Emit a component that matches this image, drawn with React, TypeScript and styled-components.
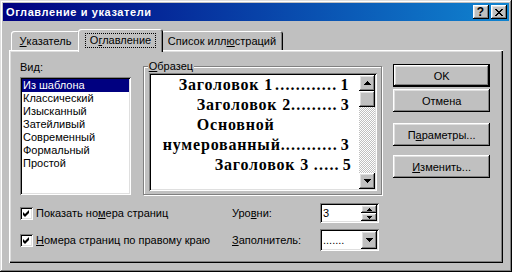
import React from 'react';
import styled, { createGlobalStyle } from 'styled-components';

const GlobalStyle = createGlobalStyle`
  html, body { margin: 0; padding: 0; background: #c0c0c0; }
  body { font-family: "Liberation Sans", Arial, sans-serif; font-size: 11px; color: #000; }
  * { box-sizing: border-box; }
`;

const raised = `box-shadow: inset -1px -1px #000, inset 1px 1px #fff, inset -2px -2px #808080, inset 2px 2px #dfdfdf;`;
const sunken = `box-shadow: inset 1px 1px #808080, inset -1px -1px #fff, inset 2px 2px #000, inset -2px -2px #dfdfdf;`;

// pixel triangle, n rows
function Arrow({ n, down }: { n: number; down?: boolean }) {
  const w = n * 2 - 1;
  return (
    <svg width={w} height={n} viewBox={`0 0 ${w} ${n}`} shapeRendering="crispEdges">
      {Array.from({ length: n }).map((_, i) => (
        <rect key={i} x={n - 1 - i} y={down ? n - 1 - i : i} width={i * 2 + 1} height={1} fill="#000" />
      ))}
    </svg>
  );
}

const closeRows = ['XX....XX', '.XX..XX.', '..XXXX..', '...XX...', '..XXXX..', '.XX..XX.', 'XX....XX'];

function CloseGlyph() {
  return (
    <svg width={8} height={7} viewBox="0 0 8 7" shapeRendering="crispEdges">
      {closeRows.map((row, y) =>
        row.split('').map((c, x) => (c === 'X' ? <rect key={`${x}-${y}`} x={x} y={y} width={1} height={1} fill="#000" /> : null))
      )}
    </svg>
  );
}

function CheckGlyph() {
  return (
    <svg width={13} height={13} viewBox="0 0 13 13">
      <path d="M3 5 L5 7 L9 3 L9 6 L5 10 L3 8 Z" fill="#000" />
    </svg>
  );
}

const styles = ['Из шаблона', 'Классический', 'Изысканный', 'Затейливый', 'Современный', 'Формальный', 'Простой'];

const toc = [
  { text: 'Заголовок 1', dots: 12, num: '1', indent: 28 },
  { text: 'Заголовок 2', dots: 9, num: '3', indent: 46 },
  { text: 'Основной', dots: 0, num: '', indent: 46 },
  { text: 'нумерованный', dots: 11, num: '3', indent: 12 },
  { text: 'Заголовок 3 ', dots: 5, num: '5', indent: 64 },
];

export default function App() {
  return (
    <>
      <GlobalStyle />
      <Window>
        <TitleBar>
          <Title>Оглавление и указатели</Title>
          <TitleButton>?</TitleButton>
          <TitleButton $gap={2}><CloseGlyph /></TitleButton>
        </TitleBar>
        <Body>
          <TabRow>
            <Tab $w={69}><u>У</u>казатель</Tab>
            <Tab $w={81} $active><Focus>О<u>г</u>лавление</Focus></Tab>
            <Tab $w={122}>Список илл<u>ю</u>страций</Tab>
          </TabRow>
          <Panel>
            <TopRow>
              <LeftCol>
                <Label>Ви<u>д</u>:</Label>
                <ListBox>
                  {styles.map((s, i) => (
                    <ListItem key={s} $selected={i === 0}>{s}</ListItem>
                  ))}
                </ListBox>
              </LeftCol>
              <GroupBox>
                <Legend><u>О</u>бразец</Legend>
                <Preview>
                  <PreviewText>
                    {toc.map(l => (
                      <TocLine key={l.text} $indent={l.indent}>
                        {l.text}
                        {l.num && <Leader>{'.'.repeat(l.dots)}</Leader>}
                        {l.num && <Num>{l.num}</Num>}
                      </TocLine>
                    ))}
                  </PreviewText>
                  <ScrollBar>
                    <ScrollButton><Arrow n={4} /></ScrollButton>
                    <ScrollButton />
                    <ScrollTrack />
                    <ScrollButton><Arrow n={4} down /></ScrollButton>
                  </ScrollBar>
                </Preview>
              </GroupBox>
              <ButtonCol>
                <Button $default>OK</Button>
                <Button $top={2}>Отмена</Button>
                <Button $top={11}>П<u>а</u>раметры...</Button>
                <Button $top={9}><u>И</u>зменить...</Button>
              </ButtonCol>
            </TopRow>
            <BottomGrid>
              <CheckRow>
                <CheckBox><CheckGlyph /></CheckBox>
                <span>Показать но<u>м</u>ера страниц</span>
              </CheckRow>
              <span>Уро<u>в</u>ни:</span>
              <Field $h={20}>
                <FieldText>3</FieldText>
                <SpinButtons>
                  <SpinButton><Arrow n={3} /></SpinButton>
                  <SpinButton><Arrow n={3} down /></SpinButton>
                </SpinButtons>
              </Field>
              <CheckRow>
                <CheckBox><CheckGlyph /></CheckBox>
                <span><u>Н</u>омера страниц по правому краю</span>
              </CheckRow>
              <span><u>З</u>аполнитель:</span>
              <Field $h={22}>
                <FieldText>.......</FieldText>
                <DropButton><Arrow n={4} down /></DropButton>
              </Field>
            </BottomGrid>
          </Panel>
        </Body>
      </Window>
    </>
  );
}

const Window = styled.div`
  width: 512px;
  height: 272px;
  padding: 3px;
  background: #c0c0c0;
  box-shadow: inset -1px -1px #000, inset 1px 1px #dfdfdf, inset -2px -2px #808080, inset 2px 2px #fff;
  display: flex;
  flex-direction: column;
`;

const TitleBar = styled.div`
  height: 18px;
  flex: none;
  display: flex;
  align-items: center;
  padding: 0 2px 0 3px;
  background: linear-gradient(to right, #000080, #1084d0);
`;

const Title = styled.div`
  flex: 1;
  color: #fff;
  font-weight: bold;
  font-size: 11px;
  letter-spacing: 0.6px;
`;

const TitleButton = styled.div<{ $gap?: number }>`
  width: 16px;
  height: 14px;
  margin-left: ${p => p.$gap || 0}px;
  background: #c0c0c0;
  ${raised}
  display: flex;
  align-items: center;
  justify-content: center;
  font-weight: bold;
  font-size: 12px;
  line-height: 14px;
  padding-right: 1px;
`;

const Body = styled.div`
  padding: 8px 6px 0;
  display: flex;
  flex-direction: column;
`;

const TabRow = styled.div`
  height: 21px;
  display: flex;
  align-items: flex-start;
  padding-left: 2px;
  position: relative;
  z-index: 1;
`;

const Tab = styled.div<{ $w: number; $active?: boolean }>`
  width: ${p => p.$w + (p.$active ? 4 : 0)}px;
  height: ${p => (p.$active ? 23 : 19)}px;
  margin: ${p => (p.$active ? '0 -2px' : '2px 0 0')};
  position: relative;
  z-index: ${p => (p.$active ? 2 : 1)};
  background: #c0c0c0;
  border-radius: 3px 3px 0 0;
  box-shadow: inset 1px 1px #fff, inset -1px 0 #000, inset -2px 0 #808080;
  display: flex;
  justify-content: center;
  align-items: flex-start;
  padding-top: 4px;
  line-height: 13px;
`;

const Focus = styled.span`
  border: 1px dotted #000;
  padding: 0 4px;
  line-height: 13px;
`;

const Panel = styled.div`
  height: 213px;
  background: #c0c0c0;
  box-shadow: inset 1px 1px #fff, inset -1px -1px #000, inset -2px -2px #808080, inset 2px 2px #dfdfdf;
  padding: 10px 13px 0 11px;
  display: flex;
  flex-direction: column;
`;

const TopRow = styled.div`
  display: flex;
  align-items: flex-start;
`;

const LeftCol = styled.div`
  width: 111px;
  margin-top: 1px;
  display: flex;
  flex-direction: column;
`;

const Label = styled.div`
  line-height: 13px;
`;

const ListBox = styled.div`
  margin-top: 3px;
  height: 118px;
  background: #fff;
  ${sunken}
  padding: 2px;
`;

const ListItem = styled.div<{ $selected?: boolean }>`
  height: 13px;
  line-height: 13px;
  padding-left: 1px;
  white-space: nowrap;
  background: ${p => (p.$selected ? '#000080' : 'transparent')};
  color: ${p => (p.$selected ? '#fff' : '#000')};
`;

const GroupBox = styled.fieldset`
  margin: 0 0 0 12px;
  width: 240px;
  padding: 0 4px 3px 5px;
  border: 1px solid #808080;
  box-shadow: inset 1px 1px #fff, 1px 1px #fff;
  min-width: 0;
`;

const Legend = styled.legend`
  padding: 0 1px;
  margin-left: -1px;
  line-height: 13px;
  background: #c0c0c0;
`;

const Preview = styled.div`
  height: 118px;
  display: flex;
  background: #fff;
  ${sunken}
  padding: 2px;
`;

const PreviewText = styled.div`
  flex: 1;
  min-width: 0;
  padding: 0 10px 0 0;
  font-family: "Liberation Serif", "Times New Roman", serif;
  font-weight: bold;
  font-size: 16px;
  line-height: 20px;
`;

const TocLine = styled.div<{ $indent: number }>`
  display: flex;
  white-space: pre;
  letter-spacing: 0.8px;
  padding-left: ${p => p.$indent}px;
`;

const Leader = styled.span`
  flex: 1;
  text-align: right;
  letter-spacing: 1.2px;
`;

const Num = styled.span`
  margin-left: 3px;
`;

const ScrollBar = styled.div`
  width: 16px;
  display: flex;
  flex-direction: column;
  background: repeating-conic-gradient(#c0c0c0 0 25%, #fff 0 50%) 0 0 / 2px 2px;
`;

const ScrollButton = styled.div`
  height: 16px;
  flex: none;
  background: #c0c0c0;
  ${raised}
  display: flex;
  align-items: center;
  justify-content: center;
`;

const ScrollTrack = styled.div`
  flex: 1;
`;

const ButtonCol = styled.div`
  width: 97px;
  margin: 4px 0 0 11px;
  display: flex;
  flex-direction: column;
`;

const Button = styled.div<{ $default?: boolean; $top?: number }>`
  height: 23px;
  margin-top: ${p => p.$top || 0}px;
  background: #c0c0c0;
  display: flex;
  align-items: center;
  justify-content: center;
  ${p =>
    p.$default
      ? 'box-shadow: inset 0 0 0 1px #000, inset -2px -2px #000, inset 2px 2px #fff, inset -3px -3px #808080, inset 3px 3px #dfdfdf;'
      : raised}
`;

const BottomGrid = styled.div`
  margin-top: 8px;
  display: grid;
  grid-template-columns: 212px 88px 59px;
  grid-template-rows: 20px 22px;
  row-gap: 6px;
  align-items: center;
  line-height: 13px;
`;

const CheckRow = styled.div`
  display: flex;
  align-items: center;
  gap: 3px;
  white-space: nowrap;
`;

const CheckBox = styled.div`
  width: 13px;
  height: 13px;
  background: #fff;
  ${sunken}
  display: flex;
`;

const Field = styled.div<{ $h: number }>`
  height: ${p => p.$h}px;
  background: #fff;
  ${sunken}
  padding: 2px;
  display: flex;
  align-items: stretch;
`;

const FieldText = styled.div`
  flex: 1;
  padding-left: 1px;
  display: flex;
  align-items: center;
`;

const SpinButtons = styled.div`
  width: 16px;
  display: flex;
  flex-direction: column;
`;

const SpinButton = styled.div`
  flex: 1;
  background: #c0c0c0;
  ${raised}
  display: flex;
  align-items: center;
  justify-content: center;
`;

const DropButton = styled.div`
  width: 16px;
  background: #c0c0c0;
  ${raised}
  display: flex;
  align-items: center;
  justify-content: center;
`;
